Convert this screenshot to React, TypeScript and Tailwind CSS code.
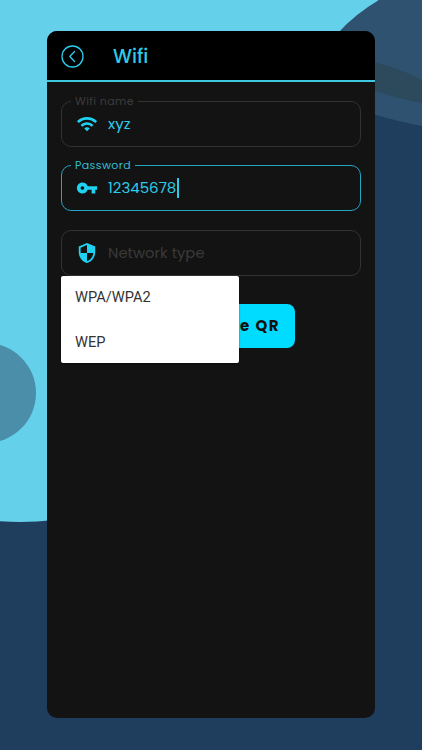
import { MdWifi, MdVpnKey, MdSecurity } from "react-icons/md";

function Field({ label, active, icon, children, className }: { label?: string; active?: boolean; icon: React.ReactNode; children: React.ReactNode; className?: string }) {
  return (
    <div className={`relative flex h-[46px] items-center rounded-[10px] pl-[14px] ${active ? "border-[1.5px] border-[#23a6bf]" : "border border-[#333333]"} ${className ?? ""}`}>
      {label && (
        <span className={`absolute left-[9px] top-[-7px] bg-[#131313] px-[4px] text-[11px] leading-[13px] tracking-[0.4px] ${active ? "text-[#35bdd6]" : "text-[#3c3c3c]"}`}>
          {label}
        </span>
      )}
      <span className="flex w-[22px] justify-center text-[#1fd2f2]">{icon}</span>
      {children}
    </div>
  );
}

export default function App() {
  return (
    <div className="relative h-[750px] w-[422px] overflow-hidden bg-[#1f3d5c] font-['Poppins','Inter','Open_Sans',sans-serif]">
      <div className="absolute left-[-330px] top-[-320px] h-[842px] w-[700px] rounded-[50%] bg-[#65d0e9]" />
      <div className="absolute left-[-64px] top-[343px] h-[100px] w-[100px] rounded-full bg-[#4b8ea9]" />
      <svg className="absolute left-0 top-0" width="422" height="140" viewBox="0 0 422 140">
        <path d="M330 0 L379 0 L338 33 L330 33 Z" fill="#65d0e9" />
        <path d="M379 0 Q355 14 338 33 L340 100 L376 115 Q400 122 422 126 L422 0 Z" fill="#2f5270" />
        <path d="M370 61 Q400 68 422 80 L422 103 Q398 99 370 89 Z" fill="#2c4a5c" />
      </svg>

      <div className="relative ml-[47px] mt-[31px] flex h-[687px] w-[328px] flex-col overflow-hidden rounded-[10px] bg-[#131313]">
        <div className="flex h-[51px] shrink-0 items-center gap-[29px] border-b-2 border-[#3ec8e0] bg-black pl-[14px] pt-[2px]">
          <svg width="23" height="23" viewBox="0 0 23 23" fill="none" stroke="#2ccbe8" strokeWidth="1.3">
            <circle cx="11.5" cy="11.5" r="10.5" />
            <path d="M13.5 6.5 L8.8 11.5 L13.5 16.5" strokeLinecap="round" strokeLinejoin="round" />
          </svg>
          <span className="text-[19px] font-medium leading-none text-[#2ccbe8]">Wifi</span>
        </div>

        <div className="relative flex flex-col px-[14px] pt-[19px]">
          <Field label="Wifi name" icon={<MdWifi size={24} />}>
            <span className="ml-[10px] text-[15px] text-[#2ccbe8]">xyz</span>
          </Field>
          <Field label="Password" active icon={<MdVpnKey size={24} />} className="mt-[18px]">
            <span className="ml-[10px] text-[15px] text-[#2ccbe8]">12345678</span>
            <span className="ml-[0.5px] h-[20px] w-[2px] bg-[#2ccbe8]" />
          </Field>
          <Field icon={<MdSecurity size={22} />} className="mt-[19px]">
            <span className="ml-[10px] text-[14.8px] text-[#3a3a3a]">Network type</span>
          </Field>

          <button className="ml-[84px] mt-[28px] flex h-[44px] w-[150px] items-center justify-end whitespace-nowrap rounded-[8px] bg-[#00dcff] pr-[15px] text-[15px] font-bold tracking-[1.5px] text-[#111111]">
            Generate QR
          </button>

          <div className="absolute left-[14px] top-[194px] flex h-[87px] w-[178px] flex-col rounded-[2px] bg-white pl-[14px] font-['Roboto',sans-serif] text-[14.6px] text-[#333333] shadow-[0_1px_2px_rgba(0,0,0,0.4)]">
            <span className="flex h-[44px] items-center">WPA/WPA2</span>
            <span className="flex h-[43px] items-center pt-[2px]">WEP</span>
          </div>
        </div>
      </div>
    </div>
  );
}
